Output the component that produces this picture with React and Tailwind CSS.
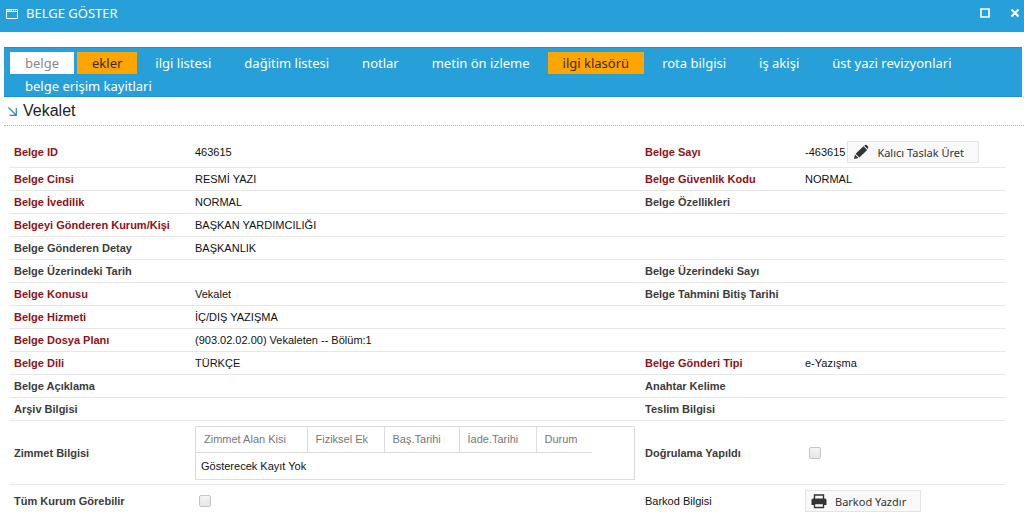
import React, { useState } from 'react';

const TABS = [
  { id: 'belge', label: 'belge' },
  { id: 'ekler', label: 'ekler', highlight: true },
  { id: 'ilgi', label: 'ilgi listesi' },
  { id: 'dagitim', label: 'dağitim listesi' },
  { id: 'notlar', label: 'notlar' },
  { id: 'metin', label: 'metin ön izleme' },
  { id: 'klasor', label: 'ilgi klasörü', highlight: true },
  { id: 'rota', label: 'rota bilgisi' },
  { id: 'akis', label: 'iş akişi' },
  { id: 'revizyon', label: 'üst yazi revizyonlari' },
  { id: 'erisim', label: 'belge erişim kayitlari' },
];

const ROWS = [
  { left: 'Belge Cinsi', leftRequired: true, value: 'RESMİ YAZI', right: 'Belge Güvenlik Kodu', rightRequired: true, rightValue: 'NORMAL' },
  { left: 'Belge İvedilik', leftRequired: true, value: 'NORMAL', right: 'Belge Özellikleri' },
  { left: 'Belgeyi Gönderen Kurum/Kişi', leftRequired: true, value: 'BAŞKAN YARDIMCILIĞI' },
  { left: 'Belge Gönderen Detay', value: 'BAŞKANLIK' },
  { left: 'Belge Üzerindeki Tarih', right: 'Belge Üzerindeki Sayı' },
  { left: 'Belge Konusu', leftRequired: true, value: 'Vekalet', right: 'Belge Tahmini Bitiş Tarihi' },
  { left: 'Belge Hizmeti', leftRequired: true, value: 'İÇ/DIŞ YAZIŞMA' },
  { left: 'Belge Dosya Planı', leftRequired: true, value: '(903.02.02.00) Vekaleten -- Bölüm:1' },
  { left: 'Belge Dili', leftRequired: true, value: 'TÜRKÇE', right: 'Belge Gönderi Tipi', rightRequired: true, rightValue: 'e-Yazışma' },
  { left: 'Belge Açıklama', right: 'Anahtar Kelime' },
  { left: 'Arşiv Bilgisi', right: 'Teslim Bilgisi' },
];

const WindowIcon = () => (
  <svg className="h-[11px] w-3" viewBox="0 0 12 11" fill="none" stroke="white" aria-hidden="true">
    <path d="M0.5 1.5h11v9H0.5z" />
    <path d="M0 3.5h12" />
    <path d="M1 2.500h5M7 2.500h1M9 2.500h1" strokeOpacity="0.6" />
  </svg>
);

const PencilIcon = () => (
  <svg className="h-4 w-4" viewBox="0 0 16 16" fill="#333" aria-hidden="true">
    <path d="M1 15l1-4.500 3.500 3.500zM2.600 9.700l7.900-7.400 3.600 3.600-7.700 7.500zM11.200 1.700l0.800-0.700q0.800-0.600 1.600 0l1.500 1.500q0.600 0.800 0 1.600l-0.600 0.900z" />
  </svg>
);

const PrinterIcon = () => (
  <svg className="h-4 w-4" viewBox="0 0 16 16" aria-hidden="true">
    <path d="M3.500 6V2H12.500V6" fill="none" stroke="#333" strokeWidth="1.400" />
    <path d="M2 5.500h12q1.500 0 1.500 1.500V12H0.500V7Q0.500 5.500 2 5.500z" fill="#333" />
    <path d="M3.500 10.500h9v4h-9z" fill="#fff" stroke="#333" strokeWidth="1.400" />
  </svg>
);

const ActionButton = ({ icon, children }) => (
  <button
    type="button"
    className="flex h-[22px] items-center gap-2 border border-[#e4e4e4] bg-[#f9f9f9] pr-3.5 pl-[5px] font-['Noto_Sans','Open_Sans',sans-serif] text-[11px] text-[#333]"
  >
    {icon}
    <span className="pt-0.5">{children}</span>
  </button>
);

const Field = ({ required, htmlFor, children }) => {
  const className = `px-[5px] font-bold ${required ? 'text-[#8e1218]' : 'text-[#3c3c3c]'}`;
  return htmlFor ? (
    <label htmlFor={htmlFor} className={className}>{children}</label>
  ) : (
    <span className={className}>{children}</span>
  );
};

const Value = ({ children }) => (
  <div className="flex min-w-0 items-center px-[5px]">{children}</div>
);

const Row = ({ className, children }) => (
  <div className={`grid grid-cols-[181fr_450fr_160fr_206fr] items-center border-b border-[#e8e8e8] ${className}`}>
    {children}
  </div>
);

const CheckBox = ({ id }) => (
  <input
    id={id}
    type="checkbox"
    className="ml-1 h-3 w-3 appearance-none rounded-xs border border-[#c4c4c4] bg-linear-to-b from-[#f4f4f4] to-[#e6e6e6] checked:bg-[#27a0da]"
  />
);

const DebitTable = () => (
  <div className="h-[54px] w-full border border-[#dcdcdc]">
    <table className="w-[396px] border-collapse">
      <thead>
        <tr className="h-[26px] border-b border-[#dcdcdc] text-left text-[#777]">
          <th className="w-[111px] border-r border-[#dcdcdc] pl-2 font-normal">Zimmet Alan Kisi</th>
          <th className="w-[77px] border-r border-[#dcdcdc] pl-2 font-normal">Fiziksel Ek</th>
          <th className="w-[75px] border-r border-[#dcdcdc] pl-2 font-normal">Baş.Tarihi</th>
          <th className="w-[77px] border-r border-[#dcdcdc] pl-2 font-normal">İade.Tarihi</th>
          <th className="pl-2 font-normal">Durum</th>
        </tr>
      </thead>
      <tbody>
        <tr className="h-[26px]">
          <td colSpan={5} className="pl-[5px]">Gösterecek Kayıt Yok</td>
        </tr>
      </tbody>
    </table>
  </div>
);

const App = () => {
  const [activeTab, setActiveTab] = useState('belge');

  const tabColor = (tab) => {
    if (tab.id === activeTab) return 'bg-white text-[#888]';
    if (tab.highlight) return 'bg-[#ffa500] text-[#3a2a10]';
    return 'text-white';
  };

  return (
    <div className="bg-white font-['Liberation_Sans',Arial,sans-serif] text-[11px] leading-4 text-[#111]">
      {/* Title bar */}
      <header className="flex h-8 items-center bg-[#27a0da] pr-1 pb-1.5 pl-1.5 text-white">
        <WindowIcon />
        <h1 className="ml-2 flex-1 font-['Noto_Sans','Open_Sans',sans-serif] text-[13px]">BELGE GÖSTER</h1>
        <div className="flex items-center gap-5">
          <button type="button" aria-label="Büyüt">
            <svg className="h-[10px] w-[10px]" viewBox="0 0 10 10" fill="none" stroke="white" strokeWidth="1.6">
              <path d="M1 1h8v8H1z" />
            </svg>
          </button>
          <button type="button" aria-label="Kapat">
            <svg className="h-[10px] w-[10px]" viewBox="0 0 10 10" fill="none" stroke="white" strokeWidth="2">
              <path d="M1.500 1.500l7 7M8.500 1.500l-7 7" />
            </svg>
          </button>
        </div>
      </header>

      <nav className="mt-[15px] mr-0.5 ml-1 flex flex-wrap gap-x-[3px] gap-y-px border-t border-[#2290c8] bg-[#27a0da] px-1.5 pt-1 font-['Noto_Sans','Open_Sans',sans-serif] text-[13px] shadow-[inset_0_-1px_0_#2290c8]">
        {TABS.map((tab) => (
          <button
            key={tab.id}
            type="button"
            onClick={() => setActiveTab(tab.id)}
            className={`h-[22px] px-[15px] ${tabColor(tab)}`}
          >
            {tab.label}
          </button>
        ))}
      </nav>

      {/* Section heading */}
      <div className="ml-1 flex h-[29px] items-center gap-1.5 border-b border-dotted border-[#b5b5b5] pl-1">
        <svg className="h-[9px] w-[9px]" viewBox="0 0 9 9" fill="none" stroke="#2f87b5" strokeWidth="1.2" aria-hidden="true">
          <path d="M0.500 0.500l7.500 7.500M8.300 1v7.300H1.500" />
        </svg>
        <h2 className="text-[16px] text-[#222]">Vekalet</h2>
      </div>

      <main className="mt-2.5 mr-[18px] ml-[9px]">
        <Row className="h-8">
          <Field required>Belge ID</Field>
          <Value>463615</Value>
          <Field required>Belge Sayı</Field>
          <Value>
            <span className="mr-0.5">-463615</span>
            <ActionButton icon={<PencilIcon />}>Kalıcı Taslak Üret</ActionButton>
          </Value>
        </Row>

        {ROWS.map((row) => (
          <Row key={row.left} className="h-[23px]">
            <Field required={row.leftRequired}>{row.left}</Field>
            <Value>{row.value}</Value>
            <Field required={row.rightRequired}>{row.right}</Field>
            <Value>{row.rightValue}</Value>
          </Row>
        ))}

        <Row className="h-16">
          <Field>Zimmet Bilgisi</Field>
          <Value>
            <DebitTable />
          </Value>
          <Field htmlFor="dogrulama">Doğrulama Yapıldı</Field>
          <Value>
            <CheckBox id="dogrulama" />
          </Value>
        </Row>

        <Row className="h-8 border-b-0">
          <Field htmlFor="tum-kurum">Tüm Kurum Görebilir</Field>
          <Value>
            <CheckBox id="tum-kurum" />
          </Value>
          <span className="px-[5px]">Barkod Bilgisi</span>
          <Value>
            <ActionButton icon={<PrinterIcon />}>Barkod Yazdır</ActionButton>
          </Value>
        </Row>
      </main>
    </div>
  );
};

export default App;
